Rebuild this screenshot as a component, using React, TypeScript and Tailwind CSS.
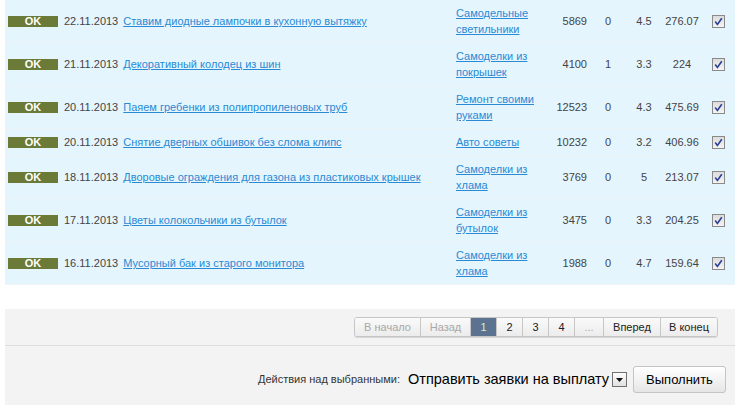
import React from "react";

type Row = {
  date: string;
  title: string;
  cat: string;
  views: string;
  comments: string;
  rating: string;
  sum: string;
};

const rows: Row[] = [
  { date: "22.11.2013", title: "Ставим диодные лампочки в кухонную вытяжку", cat: "Самодельные светильники", views: "5869", comments: "0", rating: "4.5", sum: "276.07" },
  { date: "21.11.2013", title: "Декоративный колодец из шин", cat: "Самоделки из покрышек", views: "4100", comments: "1", rating: "3.3", sum: "224" },
  { date: "20.11.2013", title: "Паяем гребенки из полипропиленовых труб", cat: "Ремонт своими руками", views: "12523", comments: "0", rating: "4.3", sum: "475.69" },
  { date: "20.11.2013", title: "Снятие дверных обшивок без слома клипс", cat: "Авто советы", views: "10232", comments: "0", rating: "3.2", sum: "406.96" },
  { date: "18.11.2013", title: "Дворовые ограждения для газона из пластиковых крышек", cat: "Самоделки из хлама", views: "3769", comments: "0", rating: "5", sum: "213.07" },
  { date: "17.11.2013", title: "Цветы колокольчики из бутылок", cat: "Самоделки из бутылок", views: "3475", comments: "0", rating: "3.3", sum: "204.25" },
  { date: "16.11.2013", title: "Мусорный бак из старого монитора", cat: "Самоделки из хлама", views: "1988", comments: "0", rating: "4.7", sum: "159.64" },
];

function Check() {
  return (
    <span className="flex h-[13px] w-[13px] items-center justify-center border border-[#8a8a8a] bg-gradient-to-b from-[#dcdcdc] to-[#f4f4f4]">
      <svg width="9" height="9" viewBox="0 0 9 9">
        <path d="M1.2 4.6 L3.4 7.4 L7.8 1.2" fill="none" stroke="#2b3f9a" strokeWidth="1.6" />
      </svg>
    </span>
  );
}

function TableRow({ r }: { r: Row }) {
  return (
    <div className="flex items-center border-b border-[#eef3f6] py-[5px] leading-[16px]">
      <div className="flex w-[451px] shrink-0 items-center pl-[3px]">
        <span className="flex h-[11px] w-[50px] items-center justify-center bg-[#6b7a36] text-[11px] font-bold text-white">OK</span>
        <span className="ml-[6px] text-[#444]">{r.date}</span>
        <a href="#" className="ml-[5px] text-[#2a8ad4] underline">{r.title}</a>
      </div>
      <div className="w-[84px] shrink-0">
        <a href="#" className="text-[#2a8ad4] underline">{r.cat}</a>
      </div>
      <div className="w-[47px] shrink-0 text-right text-[#444]">{r.views}</div>
      <div className="w-[42px] shrink-0 text-center text-[#444]">{r.comments}</div>
      <div className="w-[30px] shrink-0 text-center text-[#444]">{r.rating}</div>
      <div className="w-[46px] shrink-0 text-center text-[#444]">{r.sum}</div>
      <div className="flex flex-1 pl-[7px]">
        <Check />
      </div>
    </div>
  );
}

const pages = [
  { t: "В начало", w: "w-[65px]", s: "dis" },
  { t: "Назад", w: "w-[50px]", s: "dis" },
  { t: "1", w: "w-[26px]", s: "act" },
  { t: "2", w: "w-[26px]", s: "" },
  { t: "3", w: "w-[26px]", s: "" },
  { t: "4", w: "w-[26px]", s: "" },
  { t: "...", w: "w-[29px]", s: "dis" },
  { t: "Вперед", w: "w-[57px]", s: "" },
  { t: "В конец", w: "w-[57px]", s: "" },
];

export default function App() {
  return (
    <div className="h-[405px] w-[755px] overflow-hidden bg-white font-['Liberation_Sans',Arial,sans-serif] text-[11px]">
      <div className="ml-[5px] w-[730px] bg-[#e5f5fe]">
        {rows.map((r, i) => (
          <TableRow key={i} r={r} />
        ))}
      </div>

      <div className="ml-[5px] mt-[24px] h-[100px] w-[730px] bg-[#f3f3f3]">
        <div className="flex justify-end border-b border-[#dddddd] pb-[8px] pr-[17px] pt-[8px]">
          <div className="flex h-[20px] overflow-hidden rounded-[3px] border border-[#c6c6c6] shadow-[0_1px_0_#d8d8d8]">
            {pages.map((p, i) => (
              <span
                key={i}
                className={
                  "flex items-center justify-center border-l border-[#c6c6c6] first:border-l-0 " +
                  p.w +
                  (p.s === "act"
                    ? " bg-[#5b7390] text-[#d4f0c8]"
                    : p.s === "dis"
                    ? " bg-gradient-to-b from-[#fafafa] to-[#ececec] text-[#a8a8a8]"
                    : " bg-gradient-to-b from-[#fafafa] to-[#ececec] text-[#222]")
                }
              >
                {p.t}
              </span>
            ))}
          </div>
        </div>

        <div className="flex items-center justify-end pr-[9px] pt-[20px]">
          <span className="text-[#333]">Действия над выбранными:</span>
          <span className="ml-[8px] text-[14.5px] text-black">Отправить заявки на выплату</span>
          <span className="ml-[3px] flex h-[15px] w-[15px] items-center justify-center border border-[#707070] bg-gradient-to-b from-[#fdfdfd] to-[#e0e0e0]">
            <svg width="7" height="4" viewBox="0 0 7 4">
              <path d="M0 0 H7 L3.5 4 Z" fill="#111" />
            </svg>
          </span>
          <button className="ml-[6px] h-[27px] w-[93px] rounded-[3px] border border-[#c4c4c4] bg-gradient-to-b from-[#ffffff] to-[#e6e6e6] text-[13px] text-black">
            Выполнить
          </button>
        </div>
      </div>
    </div>
  );
}
